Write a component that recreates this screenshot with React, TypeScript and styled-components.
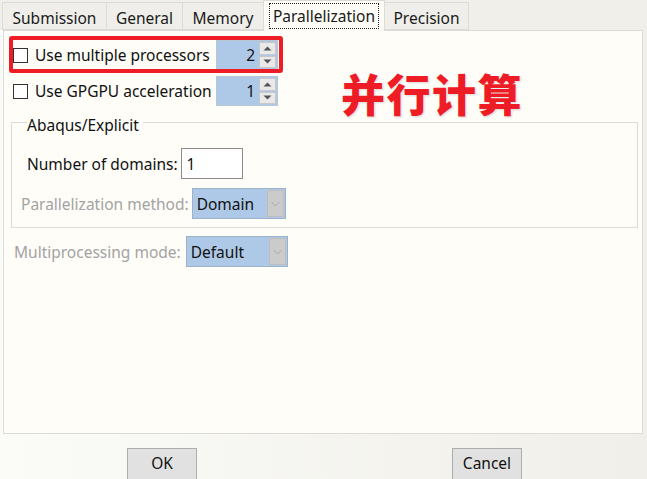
import React from "react";
import styled, { createGlobalStyle } from "styled-components";

const Global = createGlobalStyle`
  html, body { margin: 0; padding: 0; }
  body { background: #f0efea; font-family: "Noto Sans", "Noto Sans CJK SC", sans-serif; }
  #root { width: 647px; height: 479px; overflow: hidden; }
`;

const Dialog = styled.div`
  position: relative;
  width: 647px;
  height: 479px;
  display: flex;
  flex-direction: column;
  background: linear-gradient(to right, #fbfbf7, #f0efea);
  font-size: 15.5px;
  color: #111;
`;

const TabBar = styled.div`
  display: flex;
  align-items: flex-end;
  height: 32px;
  padding-left: 3px;
  background: #f0efea;
`;

const Tab = styled.div<{ $active?: boolean; $w: number }>`
  box-sizing: border-box;
  width: ${(p) => p.$w}px;
  height: ${(p) => (p.$active ? 31 : 28)}px;
  margin-bottom: ${(p) => (p.$active ? -1 : 0)}px;
  padding-top: ${(p) => (p.$active ? 0 : 3)}px;
  display: flex;
  align-items: center;
  justify-content: center;
  border: 1px solid #dcdbd6;
  border-bottom: ${(p) => (p.$active ? "none" : "1px solid #dcdbd6")};
  margin-left: -1px;
  background: ${(p) => (p.$active ? "#fefdf8" : "#efeeea")};
  position: relative;
  z-index: ${(p) => (p.$active ? 2 : 1)};
  color: #1a1a1a;
`;

const FocusText = styled.span`
  outline: 1px dotted #222;
  padding: 1px 3px;
  line-height: 22px;
`;

const Panel = styled.div`
  flex: none;
  height: 404px;
  margin: 0 4px 0 3px;
  box-sizing: border-box;
  border: 1px solid #dcdbd6;
  background: #fefdf8;
  padding: 9px 0 0 9px;
  display: flex;
  flex-direction: column;
`;

const OptionGrid = styled.div`
  display: grid;
  grid-template-columns: 203px 62px;
  row-gap: 6px;
  align-items: center;
`;

const CheckLabel = styled.label`
  display: flex;
  align-items: center;
  gap: 7px;
  white-space: nowrap;
`;

const Box = styled.span`
  width: 13px;
  height: 13px;
  border: 1px solid #333;
  background: #fff;
  flex: none;
`;

const Spin = styled.div`
  box-sizing: border-box;
  height: 30px;
  display: flex;
  border: 1px solid #b9c6d4;
  background: #adc9e7;
`;

const SpinValue = styled.div`
  flex: 1;
  display: flex;
  align-items: center;
  justify-content: flex-end;
  padding-right: 4px;
`;

const SpinArrows = styled.div`
  width: 17px;
  display: flex;
  flex-direction: column;
  gap: 1px;
  padding: 1px 1px 1px 0;
`;

const ArrowBtn = styled.div`
  flex: 1;
  background: #e9e9e9;
  border: 1px solid #c8c8c8;
  display: flex;
  align-items: center;
  justify-content: center;
`;

const Group = styled.div`
  margin: 16px 0 0 -2px;
  width: 627px;
  height: 106px;
  box-sizing: border-box;
  border: 1px solid #dcdbd6;
  padding: 0 0 0 15px;
  display: flex;
  flex-direction: column;
`;

const GroupTitle = styled.span`
  align-self: flex-start;
  margin-top: -8px;
  padding-right: 4px;
  line-height: 20px;
  background: #fefdf8;
  color: #111;
`;

const FieldRow = styled.div<{ $indent?: number; $gap?: number; $mt?: number }>`
  display: flex;
  align-items: center;
  gap: ${(p) => p.$gap ?? 3}px;
  margin-left: ${(p) => p.$indent ?? 0}px;
  margin-top: ${(p) => p.$mt ?? 0}px;
  white-space: nowrap;
`;

const Label = styled.span<{ $disabled?: boolean }>`
  color: ${(p) => (p.$disabled ? "#a3a3a3" : "#111")};
`;

const TextInput = styled.div`
  box-sizing: border-box;
  width: 62px;
  height: 31px;
  border: 1px solid #8a8a8a;
  background: #fff;
  display: flex;
  align-items: center;
  padding-left: 5px;
`;

const Combo = styled.div<{ $w: number }>`
  box-sizing: border-box;
  width: ${(p) => p.$w}px;
  height: 31px;
  border: 1px solid #9db2c8;
  background: #adc9e7;
  display: flex;
  align-items: stretch;
`;

const ComboText = styled.div`
  flex: 1;
  display: flex;
  align-items: center;
  padding-left: 4px;
`;

const ComboBtn = styled.div`
  width: 15px;
  margin: 1px;
  background: #cbcbcb;
  border: 1px solid #bdbdbd;
  display: flex;
  align-items: center;
  justify-content: center;
`;

const ButtonBar = styled.div`
  flex: 1;
  display: flex;
  align-items: flex-start;
  padding-top: 14px;
`;

const Button = styled.div<{ $ml: number }>`
  box-sizing: border-box;
  margin-left: ${(p) => p.$ml}px;
  width: 70px;
  height: 32px;
  border: 1px solid #adadad;
  background: #e1e1e1;
  display: flex;
  align-items: center;
  justify-content: center;
  padding-bottom: 2px;
`;

const Highlight = styled.div`
  position: absolute;
  left: 9px;
  top: 36px;
  width: 274px;
  height: 37px;
  box-sizing: border-box;
  border: 4px solid #ee1c25;
  border-radius: 3px;
  pointer-events: none;
`;

const Annotation = styled.div`
  position: absolute;
  left: 341px;
  top: 63px;
  font-family: "Noto Sans CJK SC", sans-serif;
  font-weight: 900;
  font-size: 44px;
  line-height: 60px;
  letter-spacing: 1.5px;
  color: #ee1c25;
  text-shadow: 0 0 2px #fff, 1px 1px 2px #ccc, -1px -1px 1px #fff, 1px -1px 1px #fff, -1px 1px 1px #fff,
    0 0 3px #fff;
`;

const Up = () => (
  <svg width="9" height="5" viewBox="0 0 9 5">
    <path d="M0.5 4.5 L4.5 0.5 L8.5 4.5 Z" fill="#555" />
  </svg>
);
const Down = () => (
  <svg width="9" height="5" viewBox="0 0 9 5">
    <path d="M0.5 0.5 L4.5 4.5 L8.5 0.5 Z" fill="#555" />
  </svg>
);
const Chevron = () => (
  <svg width="9" height="6" viewBox="0 0 9 6">
    <path d="M0.5 1 L4.5 5 L8.5 1" fill="none" stroke="#a8a8a8" strokeWidth="1" />
  </svg>
);

const SpinBox = ({ value }: { value: string }) => (
  <Spin>
    <SpinValue>{value}</SpinValue>
    <SpinArrows>
      <ArrowBtn>
        <Up />
      </ArrowBtn>
      <ArrowBtn>
        <Down />
      </ArrowBtn>
    </SpinArrows>
  </Spin>
);

const ComboBox = ({ value, w }: { value: string; w: number }) => (
  <Combo $w={w}>
    <ComboText>{value}</ComboText>
    <ComboBtn>
      <Chevron />
    </ComboBtn>
  </Combo>
);

export default function App() {
  return (
    <>
      <Global />
      <Dialog>
        <TabBar>
          <Tab $w={105}>Submission</Tab>
          <Tab $w={77}>General</Tab>
          <Tab $w={82}>Memory</Tab>
          <Tab $w={122} $active>
            <FocusText>Parallelization</FocusText>
          </Tab>
          <Tab $w={85}>Precision</Tab>
        </TabBar>
        <Panel>
          <OptionGrid>
            <CheckLabel>
              <Box />
              Use multiple processors
            </CheckLabel>
            <SpinBox value="2" />
            <CheckLabel>
              <Box />
              Use GPGPU acceleration
            </CheckLabel>
            <SpinBox value="1" />
          </OptionGrid>
          <Group>
            <GroupTitle>Abaqus/Explicit</GroupTitle>
            <FieldRow $mt={13}>
              <Label>Number of domains:</Label>
              <TextInput>1</TextInput>
            </FieldRow>
            <FieldRow $indent={-6} $mt={9}>
              <Label $disabled>Parallelization method:</Label>
              <ComboBox value="Domain" w={94} />
            </FieldRow>
          </Group>
          <FieldRow $indent={1} $mt={8} $gap={5}>
            <Label $disabled>Multiprocessing mode:</Label>
            <ComboBox value="Default" w={102} />
          </FieldRow>
        </Panel>
        <ButtonBar>
          <Button $ml={127}>OK</Button>
          <Button $ml={255}>Cancel</Button>
        </ButtonBar>
        <Highlight />
        <Annotation>并行计算</Annotation>
      </Dialog>
    </>
  );
}
